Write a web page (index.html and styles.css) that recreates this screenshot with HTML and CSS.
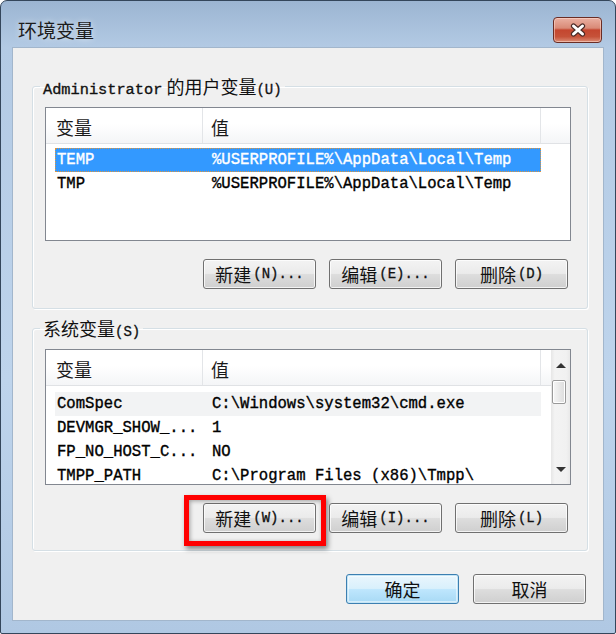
FILE: index.html
```html
<!DOCTYPE HTML>
<html>
<head>
  <meta charset="utf-8">
  <title>环境变量</title>
  <link rel="stylesheet" href="styles.css">
</head>
<body>

  <div class="window">
    <div class="titlebar">
      <span class="title">环境变量</span>
      <div class="close">
        <svg width="20" height="14" viewBox="0 0 20 14">
          <path d="M5.5 3 L14.5 11 M14.5 3 L5.5 11" stroke="#4a2a26" stroke-width="5.2" stroke-linecap="round"/>
          <path d="M5.5 3 L14.5 11 M14.5 3 L5.5 11" stroke="#fff" stroke-width="3" stroke-linecap="round"/>
        </svg>
      </div>
    </div>

    <div class="client">
      <!-- user variables -->
      <fieldset class="group">
        <legend><span class="mono">Administrator</span> 的用户变量<span class="key">(U)</span></legend>
        <div class="list">
          <div class="list-main">
            <div class="list-head">
              <div class="head-col">变量</div>
              <div class="head-col col-val">值</div>
              <div class="head-col"></div>
            </div>
            <div class="row selected"><span>TEMP</span><span>%USERPROFILE%\AppData\Local\Temp</span></div>
            <div class="row"><span>TMP</span><span>%USERPROFILE%\AppData\Local\Temp</span></div>
          </div>
        </div>
        <div class="btn-row">
          <div class="btn">新建<span class="key">(N)...</span></div>
          <div class="btn">编辑<span class="key">(E)...</span></div>
          <div class="btn">删除<span class="key">(D)</span></div>
        </div>
      </fieldset>

      <!-- system variables -->
      <fieldset class="group group-sys">
        <legend>系统变量<span class="key">(S)</span></legend>
        <div class="list list-sys">
          <div class="list-main">
            <div class="list-head">
              <div class="head-col">变量</div>
              <div class="head-col col-val">值</div>
              <div class="head-col"></div>
            </div>
            <div class="row hover"><span>ComSpec</span><span>C:\Windows\system32\cmd.exe</span></div>
            <div class="row"><span>DEVMGR_SHOW_...</span><span>1</span></div>
            <div class="row"><span>FP_NO_HOST_C...</span><span>NO</span></div>
            <div class="row"><span>TMPP_PATH</span><span>C:\Program Files (x86)\Tmpp\</span></div>
          </div>
          <div class="scrollbar">
            <div class="sb-btn"><i class="arrow-up"></i></div>
            <div class="sb-thumb"></div>
            <div class="sb-track"></div>
            <div class="sb-btn"><i class="arrow-down"></i></div>
          </div>
        </div>
        <div class="btn-row">
          <div class="btn marked">新建<span class="key">(W)...</span></div>
          <div class="btn">编辑<span class="key">(I)...</span></div>
          <div class="btn">删除<span class="key">(L)</span></div>
        </div>
      </fieldset>

      <div class="dialog-btns">
        <div class="btn btn-default">确定</div>
        <div class="btn">取消</div>
      </div>
    </div>
  </div>

</body>
</html>
```

FILE: styles.css
```css
html,
body {
  margin: 0;
  padding: 0;
}
body {
  background: #fff;
  font-family: "Noto Sans CJK SC", sans-serif;
  font-size: 18px;
  color: #111;
}
.mono,
.row {
  font-family: "Liberation Mono", "Noto Sans CJK SC", monospace;
  -webkit-text-stroke: 0.35px currentColor;
}
.mono {
  font-size: 15.3px;
}
.key {
  font-family: "Liberation Mono", monospace;
  font-size: 14px;
  -webkit-text-stroke: 0.3px currentColor;
}

/* window frame */
.window {
  width: 616px;
  height: 634px;
  box-sizing: border-box;
  border: 1px solid #34465b;
  border-radius: 7px 7px 2px 2px;
  background: linear-gradient(#9cb5d2, #b3cae4 46px, #bed4ec 60%, #b0c8e3);
  padding: 0 11px 12px 11px;
  display: flex;
  flex-direction: column;
}
.titlebar {
  height: 46px;
  box-sizing: border-box;
  padding: 11px 2px 0 6px;
  display: flex;
  align-items: center;
  justify-content: space-between;
}
.title {
  font-size: 19px;
  line-height: 20px;
  color: #1c1c1c;
  text-shadow: 0 0 6px rgba(255, 255, 255, 0.7);
}
.close {
  width: 49px;
  height: 26px;
  box-sizing: border-box;
  border: 1px solid #6a2d25;
  border-radius: 4px;
  background: linear-gradient(#eab0a2, #d98a77 42%, #c4462f 50%, #c65239 78%, #dc8d76);
  box-shadow: inset 0 0 0 1px rgba(255, 220, 210, 0.55);
  display: flex;
  align-items: center;
  justify-content: center;
}

/* client area */
.client {
  flex: 1;
  border: 1px solid #a2b6cc;
  background: #f0f0f0;
  padding: 28px 15px 0 19px;
  display: flex;
  flex-direction: column;
}
.group {
  margin: 0;
  min-width: 0;
  border: 1px solid #d5dfe5;
  border-radius: 3px;
  box-shadow: inset 1px 1px 0 #fff, 1px 1px 0 #fff;
  padding: 11px 16px 19px 12px;
}
.group legend {
  margin-left: -5px;
  padding: 0 3px;
  line-height: 20px;
  height: 20px;
  font-size: 18px;
}
.group-sys {
  margin-top: 9px;
  padding-bottom: 17px;
}

/* list view */
.list {
  height: 134px;
  box-sizing: border-box;
  border: 1px solid #828790;
  background: #fff;
  display: flex;
  overflow: hidden;
}
.list-sys {
  height: 136px;
}
.list-main {
  flex: 1;
}
.list-head {
  height: 35px;
  display: grid;
  grid-template-columns: 157px 338px 1fr;
  background: linear-gradient(#fff 45%, #f4f5f7);
  border-bottom: 1px solid #e0e2e5;
  margin-bottom: 4px;
}
.head-col {
  border-right: 1px solid #e3e5e8;
  padding: 3px 0 0 10px;
  line-height: 32px;
  font-size: 18px;
  color: #1a1a1a;
}
.head-col:last-child {
  border-right: 0;
}
.col-val {
  padding-left: 8px;
}
.row {
  margin-left: 9px;
  width: 486px;
  height: 24px;
  box-sizing: border-box;
  padding-left: 2px;
  display: grid;
  grid-template-columns: 155px 1fr;
  font-size: 15.6px;
  line-height: 24px;
  color: #000;
  white-space: nowrap;
}
.row.selected {
  background: #3399ff;
  color: #fff;
  outline: 1px dotted #e0953a;
  outline-offset: -1px;
}
.row.hover {
  background: #f2f3f4;
}
.list-sys .list-head {
  margin-bottom: 6px;
}

/* scrollbar */
.scrollbar {
  width: 28px;
  display: flex;
  flex-direction: column;
  background: linear-gradient(90deg, #e6e6e6, #f3f3f3 20%, #f1f1f1 80%, #e9e9e9);
}
.sb-btn {
  height: 30px;
  display: flex;
  align-items: center;
  justify-content: center;
}
.arrow-up,
.arrow-down {
  width: 0;
  height: 0;
  border-left: 5px solid transparent;
  border-right: 5px solid transparent;
}
.arrow-up {
  border-bottom: 5px solid #333;
}
.arrow-down {
  border-top: 5px solid #333;
}
.sb-thumb {
  height: 22px;
  margin: 0 4px 0 1px;
  border: 1px solid #999;
  border-radius: 2px;
  background: linear-gradient(90deg, #f6f6f6, #e9e9e9 50%, #dcdcdc);
  box-shadow: inset 0 0 0 1px #fff;
}
.sb-track {
  flex: 1;
}

/* buttons */
.btn-row {
  margin-top: 18px;
  padding-right: 3px;
  display: flex;
  justify-content: flex-end;
  gap: 13px;
}
.btn {
  width: 113px;
  height: 30px;
  box-sizing: border-box;
  border: 1px solid #707070;
  border-radius: 3px;
  background: linear-gradient(#f3f3f3, #ebebeb 48%, #dddddd 52%, #cfcfcf);
  box-shadow: inset 0 0 0 1px rgba(255, 255, 255, 0.75);
  display: flex;
  align-items: center;
  justify-content: center;
  font-size: 18px;
  line-height: 20px;
  color: #111;
  position: relative;
}
.btn .key {
  margin-left: 2px;
}
.btn-default {
  border-color: #3c7fb1;
  background: linear-gradient(#eaf6fd, #d9f0fc 48%, #bee6fd 52%, #a7d9f5);
  box-shadow: inset 0 0 0 1px #c4e5f6, inset 0 0 0 2px rgba(255, 255, 255, 0.5);
}
.marked::after {
  content: "";
  position: absolute;
  left: -20px;
  top: -9px;
  width: 142px;
  height: 51px;
  box-sizing: border-box;
  border: 5px solid #ff0000;
  box-shadow: 2px 3px 5px rgba(0, 0, 0, 0.45), inset 1px 1px 4px rgba(0, 0, 0, 0.35);
}
.dialog-btns {
  margin-top: 23px;
  padding-right: 2px;
  display: flex;
  justify-content: flex-end;
  gap: 14px;
}
```
